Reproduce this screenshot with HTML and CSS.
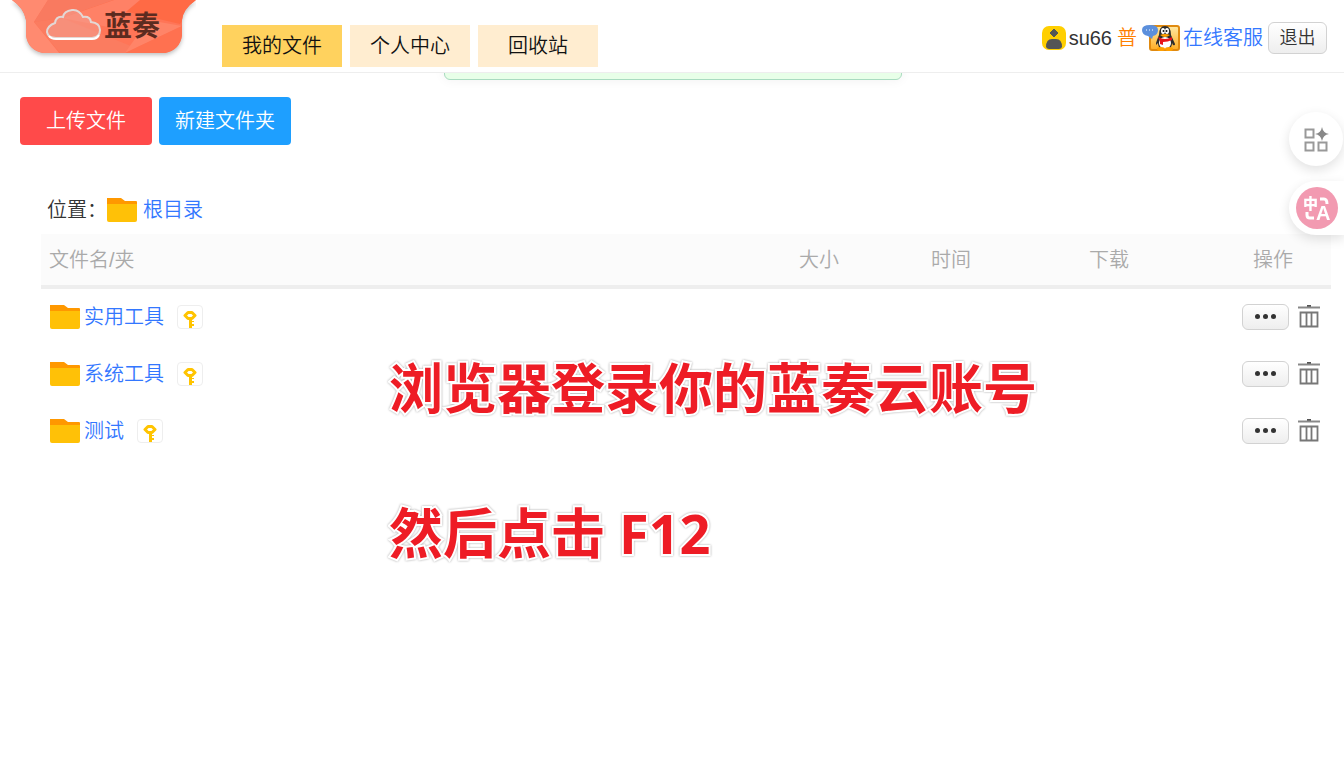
FILE: index.html
```html
<!DOCTYPE html>
<html lang="zh-Hans">
<head>
  <meta charset="UTF-8" />
  <meta name="viewport" content="width=device-width, initial-scale=1" />
  <title>蓝奏云 - 我的文件</title>
  <link rel="stylesheet" href="styles.css">
</head>
<body>
  <!-- 共用图标 -->
  <svg class="sprite" aria-hidden="true">
    <symbol id="icon-folder" viewBox="0 0 30 24">
      <path d="M0 0h14l4 3h11q1 0 1 1v3H0z" fill="#ff9800"/>
      <path d="M0 6h30v16q0 2-2 2H2q-2 0-2-2z" fill="#ffc107"/>
    </symbol>
    <symbol id="icon-key" viewBox="0 0 14 18">
      <path d="M5 2.500h4l3 3-3 3H5l-3-3z" fill="none" stroke="#ffc400" stroke-width="3" stroke-linejoin="round"/>
      <path d="M6 9h3v2h2v1H9v2h2v2H9v2H6z" fill="#ffc400"/>
    </symbol>
    <symbol id="icon-trash" viewBox="0 0 22 23">
      <path d="M9 0h4v2H9z" fill="#555"/>
      <path d="M0 2.500h22" stroke="#888" stroke-width="2"/>
      <path d="M2.500 7.500h17v14h-17zM8.500 8v13M13.500 8v13" fill="none" stroke="#777" stroke-width="1.800"/>
    </symbol>
  </svg>

  <header class="header">
    <a class="logo" href="#" aria-label="蓝奏">
      <svg width="186" height="62" viewBox="0 0 186 62">
        <defs>
          <clipPath id="ribbon"><path d="M2 0H186Q173 9 172 20V35Q170 50 155 53H33Q18 50 16 35V20Q14 8 2 0z"/></clipPath>
        </defs>
        <g class="logo-ribbon">
          <g clip-path="url(#ribbon)">
            <path d="M0 0h186v62H0z" fill="#ff7557"/>
            <path d="M0 0h38L24 22 50 54H0z" fill="#ff8a70"/>
            <path d="M38 0h66L52 18 24 22z" fill="#f97a60"/>
            <path d="M24 22l28-4 86 35H50z" fill="#fb7c60"/>
            <path d="M104 0h82l-16 24-60-14-58 8z" fill="#ff6a45"/>
            <path d="M52 18l52-18h26l-32 27z" fill="#ff8166"/>
            <path d="M172 26l-57 27 23-33z" fill="#ff8468"/>
            <path d="M115 53l57-27v27z" fill="#ff7150"/>
          </g>
        </g>
        <path d="M46 38h36q8-1 8-8 0-7-9-8-1-6-8-5-4-8-11-7-8 1-9 7-7-1-8 6-8 3-8 9 1 6 9 6z" fill="#f3a294" fill-opacity=".5" stroke="#e3d8d5" stroke-width="2"/>
        <path d="M39 36q2 3 7 3h36q5 0 7-4" fill="none" stroke="#fff" stroke-width="2"/>
        <text class="logo-text" x="94" y="36">蓝奏</text>
      </svg>
    </a>
    <nav class="nav">
      <a class="nav-item active" href="#">我的文件</a>
      <a class="nav-item" href="#">个人中心</a>
      <a class="nav-item" href="#">回收站</a>
    </nav>
    <div class="user">
      <svg class="avatar" width="24" height="24" viewBox="0 0 24 24" aria-hidden="true">
        <rect width="24" height="24" rx="7" fill="#ffcf00"/>
        <path d="M12 3l4 4-4 4-4-4z" fill="#555" stroke="#555" stroke-linejoin="round"/>
        <path d="M4 21q0-8 6-8h4q6 0 6 8-1 2-3 2H7q-2 0-3-2z" fill="#555"/>
      </svg>
      <span class="user-name">su66</span>
      <span class="user-level">普</span>
      <a class="service" href="#">
        <svg width="38" height="26" viewBox="0 0 38 26" aria-hidden="true">
          <defs>
            <linearGradient id="qq-bg" x1="0" y1="0" x2="0" y2="1">
              <stop offset="0" stop-color="#ffe9a3"/><stop offset="1" stop-color="#ffad24"/>
            </linearGradient>
          </defs>
          <rect x="8" y="1" width="29" height="24" rx="2" fill="url(#qq-bg)" stroke="#e08a10" stroke-width="2"/>
          <path d="M14 18q2-6 3-8 0-9 6-9t6 9l4 9q0 2-2 1l-1-2q0 5-4 6h-6q-4-1-4-6l-2 2z" fill="#2c2c2c"/>
          <ellipse cx="23" cy="18" rx="6" ry="6" fill="#fff"/>
          <ellipse cx="21" cy="6" rx="2" ry="3" fill="#fff"/>
          <ellipse cx="25" cy="6" rx="2" ry="3" fill="#fff"/>
          <circle cx="21.500" cy="6" r="1" fill="#111"/><circle cx="24.500" cy="6" r="1" fill="#111"/>
          <path d="M18 10q5-2 10 0-5 4-10 0z" fill="#ffa000"/>
          <path d="M16 12q7 4 14 0v3q-4 2-9 2v3l-3-1v-3z" fill="#e8151b"/>
          <ellipse cx="19" cy="24" rx="4" ry="2" fill="#ffa000"/><ellipse cx="27" cy="24" rx="4" ry="2" fill="#ffa000"/>
          <path d="M8 0q8 0 8 5t-5 6l-1 3-4-3q-6-1-6-6t8-5z" fill="#5b8fdc"/>
          <path d="M4 5h1M7 5h1M10 5h1" stroke="#fff" stroke-width="1"/>
        </svg>
        <span>在线客服</span>
      </a>
      <button class="btn-gray btn-exit" type="button">退出</button>
    </div>
  </header>
  <div class="toast"></div>

  <main class="main">
    <div class="toolbar">
      <button class="btn btn-red" type="button">上传文件</button>
      <button class="btn btn-blue" type="button">新建文件夹</button>
    </div>

    <section class="files">
      <div class="path">
        <span>位置：</span>
        <svg width="30" height="24"><use href="#icon-folder"/></svg>
        <a href="#">根目录</a>
      </div>
      <table class="file-table">
        <thead>
          <tr>
            <th>文件名/夹</th>
            <th class="col-size">大小</th>
            <th class="col-time">时间</th>
            <th class="col-down">下载</th>
            <th class="col-ops">操作</th>
          </tr>
        </thead>
        <tbody>
          <tr>
            <td colspan="4">
              <div class="file-name">
                <svg width="30" height="24"><use href="#icon-folder"/></svg>
                <a href="#">实用工具</a>
                <button class="key" type="button" aria-label="密码"><svg width="14" height="18"><use href="#icon-key"/></svg></button>
              </div>
            </td>
            <td>
              <div class="ops">
                <button class="btn-gray btn-more" type="button" aria-label="更多"><i></i><i></i><i></i></button>
                <button class="btn-trash" type="button" aria-label="删除"><svg width="22" height="23"><use href="#icon-trash"/></svg></button>
              </div>
            </td>
          </tr>
          <tr>
            <td colspan="4">
              <div class="file-name">
                <svg width="30" height="24"><use href="#icon-folder"/></svg>
                <a href="#">系统工具</a>
                <button class="key" type="button" aria-label="密码"><svg width="14" height="18"><use href="#icon-key"/></svg></button>
              </div>
            </td>
            <td>
              <div class="ops">
                <button class="btn-gray btn-more" type="button" aria-label="更多"><i></i><i></i><i></i></button>
                <button class="btn-trash" type="button" aria-label="删除"><svg width="22" height="23"><use href="#icon-trash"/></svg></button>
              </div>
            </td>
          </tr>
          <tr>
            <td colspan="4">
              <div class="file-name">
                <svg width="30" height="24"><use href="#icon-folder"/></svg>
                <a href="#">测试</a>
                <button class="key" type="button" aria-label="密码"><svg width="14" height="18"><use href="#icon-key"/></svg></button>
              </div>
            </td>
            <td>
              <div class="ops">
                <button class="btn-gray btn-more" type="button" aria-label="更多"><i></i><i></i><i></i></button>
                <button class="btn-trash" type="button" aria-label="删除"><svg width="22" height="23"><use href="#icon-trash"/></svg></button>
              </div>
            </td>
          </tr>
        </tbody>
      </table>
    </section>
  </main>

  <!-- 操作提示 -->
  <div class="tips">
    <p>浏览器登录你的蓝奏云账号</p>
    <p>然后点击 F12</p>
  </div>

  <!-- 右侧悬浮按钮 -->
  <aside class="float-bar">
    <button class="float-btn" type="button" aria-label="应用">
      <svg width="26" height="26" viewBox="0 0 26 26">
        <path d="M2.500 3.500h8v8h-8zM2.500 16.500h8v8h-8zM15.500 16.500h8v8h-8z" fill="none" stroke="#999" stroke-width="2"/>
        <path d="M19 1q1 6 7 7-6 1-7 7-1-6-7-7 6-1 7-7z" fill="#888"/>
      </svg>
    </button>
    <button class="float-btn float-translate" type="button" aria-label="翻译">
      <svg width="42" height="42" viewBox="0 0 42 42">
        <circle cx="21" cy="21" r="21" fill="#f29ab1"/>
        <text class="tr-zh" x="7" y="22">中</text>
        <text class="tr-en" x="20" y="33">A</text>
        <path d="M24 12h4q3 0 3 5M11 25v3q0 3 3 3h4" fill="none" stroke="#fff" stroke-width="3"/>
      </svg>
    </button>
  </aside>
</body>
</html>
```
FILE: styles.css
```css
* {
  box-sizing: border-box;
}
body {
  margin: 0;
  font-family: "Liberation Sans", "Noto Sans CJK SC", sans-serif;
  font-size: 20px;
  font-weight: 350;
  line-height: 30px;
  color: #333;
  background: #fff;
}
a {
  color: #3377ff;
  text-decoration: none;
}
button {
  font: inherit;
  padding: 0;
  border: none;
  background: none;
  cursor: pointer;
}
svg {
  display: block;
  flex: none;
}
.sprite {
  position: absolute;
  width: 0;
  height: 0;
}

/* 顶部 */
.header {
  position: relative;
  z-index: 2;
  display: flex;
  align-items: flex-start;
  height: 73px;
  padding: 0 17px 0 10px;
  background: #fff;
  border-bottom: 1px solid #eee;
}
.logo-ribbon {
  filter: drop-shadow(0 2px 2px rgba(0, 0, 0, 0.25));
}
.logo-text {
  font-family: "Noto Sans CJK SC", sans-serif;
  font-size: 28px;
  font-weight: 700;
  fill: #5c2b20;
}
.nav {
  display: flex;
  gap: 8px;
  margin: 25px 0 0 26px;
}
.nav-item {
  width: 120px;
  line-height: 42px;
  text-align: center;
  color: #111;
  background: #ffedd0;
}
.nav-item.active {
  background: #ffd25e;
}
.user {
  display: flex;
  align-items: center;
  margin: 22px 0 0 auto;
}
.avatar {
  margin-right: 3px;
}
.user-level {
  margin: 0 5px;
  color: #ff8000;
}
.service {
  display: flex;
  align-items: center;
  gap: 3px;
}
.btn-gray {
  border: 1px solid #d2d2d2;
  border-radius: 6px;
  background: linear-gradient(#fff, #eee);
  color: #333;
}
.btn-exit {
  width: 59px;
  height: 32px;
  margin-left: 5px;
  font-size: 18px;
}

/* 被顶部遮住的提示条 */
.toast {
  position: absolute;
  z-index: 1;
  top: 40px;
  left: 50%;
  width: 458px;
  height: 40px;
  margin-left: -228px;
  background: #e8ffe8;
  border: 1px solid #a9dbc0;
  border-radius: 6px;
  box-shadow: 0 0 12px rgba(0, 0, 0, 0.06);
}

/* 工具栏 */
.toolbar {
  display: flex;
  gap: 7px;
  padding: 24px 20px 0;
}
.btn {
  width: 132px;
  height: 48px;
  border-radius: 4px;
  color: #fff;
}
.btn-red {
  background: #ff4a4a;
}
.btn-blue {
  background: #1e9fff;
}

/* 文件列表 */
.files {
  margin: 49px 13px 0 41px;
}
.path {
  display: flex;
  align-items: center;
  height: 40px;
  padding: 0 0 8px 6px;
}
.path a {
  margin-left: 6px;
}
.file-table {
  width: 100%;
  table-layout: fixed;
  border-spacing: 0;
}
.file-table th {
  height: 55px;
  padding: 0 8px;
  font-weight: 350;
  text-align: left;
  color: #aaa;
  background: #fbfbfb;
  border-bottom: 4px solid #eee;
}
.file-table td {
  height: 57px;
  padding: 0 8px 2px;
}
.file-table .col-size {
  width: 132px;
}
.file-table .col-time {
  width: 158px;
}
.file-table .col-down {
  width: 134px;
}
.file-table .col-ops {
  width: 116px;
  text-align: center;
}
.file-name {
  display: flex;
  align-items: center;
  padding-left: 1px;
}
.file-name a {
  margin: 0 13px 0 4px;
}
.key {
  display: flex;
  align-items: flex-end;
  justify-content: center;
  width: 26px;
  height: 24px;
  border: 1px solid #eee;
  border-radius: 4px;
}
.ops {
  display: flex;
  align-items: center;
  justify-content: flex-end;
  gap: 9px;
  padding-right: 3px;
}
.btn-more {
  display: flex;
  align-items: center;
  justify-content: center;
  gap: 3px;
  width: 47px;
  height: 26px;
}
.btn-more i {
  width: 5px;
  height: 5px;
  border-radius: 50%;
  background: #333;
}

/* 操作提示 */
.tips {
  position: absolute;
  z-index: 3;
  top: 316px;
  left: 389px;
  font-family: "Open Sans", "Noto Sans CJK SC", sans-serif;
  font-size: 54px;
  font-weight: 700;
  line-height: 145px;
  white-space: nowrap;
  color: #ee1c25;
  -webkit-text-stroke: 4px #fff;
  paint-order: stroke fill;
  filter: drop-shadow(0 0 1px rgba(0, 0, 0, 0.35));
  pointer-events: none;
}
.tips p {
  margin: 0;
}

/* 悬浮按钮 */
.float-bar {
  position: fixed;
  z-index: 4;
  top: 112px;
  right: 0;
  display: flex;
  flex-direction: column;
  gap: 15px;
}
.float-btn {
  display: flex;
  align-items: center;
  justify-content: center;
  width: 54px;
  height: 54px;
  margin-right: 1px;
  border-radius: 50%;
  background: #fff;
  box-shadow: 0 4px 12px rgba(0, 0, 0, 0.12);
}
.float-translate {
  width: 55px;
  margin-right: 0;
  border-radius: 27px 0 0 27px;
}
.tr-zh {
  font-family: "Noto Sans CJK SC", sans-serif;
  font-size: 15px;
  font-weight: 900;
  fill: #fff;
}
.tr-en {
  font-family: "Liberation Sans", sans-serif;
  font-size: 20px;
  font-weight: 700;
  fill: #fff;
}
```
